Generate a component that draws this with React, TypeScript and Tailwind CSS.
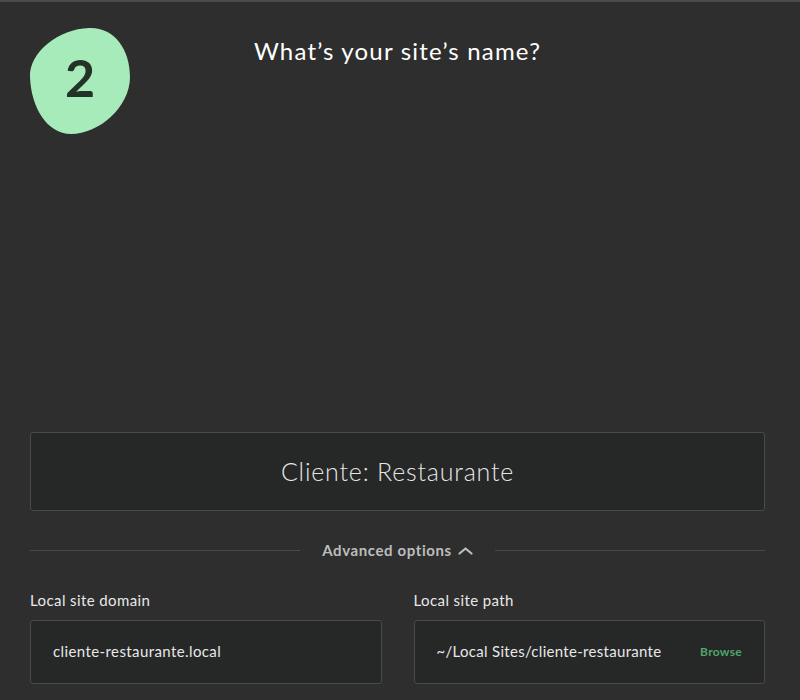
export default function App() {
  return (
    <div className="relative w-[800px] h-[700px] overflow-hidden bg-[#2e2e2e] border-t-2 border-[#4b4b4b] font-['Lato','Noto_Sans',sans-serif]">
      {/* step badge */}
      <div className="absolute left-[29px] top-[25px] w-[102px] h-[108px] flex items-center justify-center">
        <svg className="absolute inset-0" width="102" height="108" viewBox="0 0 102 108">
          <path
            d="M 60 1 C 85 0, 101 22, 101 50 C 101 80, 70 107, 42 107 C 18 107, 2 80, 1 50 C 0 25, 30 2, 60 1 Z"
            fill="#a7ebbb"
          />
        </svg>
        <span className="relative text-[52px] font-bold leading-none text-[#243327] -translate-y-[4px]">2</span>
      </div>

      <div className="flex flex-col h-full pl-[30px] pr-[35px]">
        <h1 className="mt-[34px] text-center text-[24px] leading-[30px] text-white tracking-[1.2px]">
          What’s your site’s name?
        </h1>

        <div className="mt-[366px] h-[79px] flex items-center justify-center bg-[#262727] border border-[#4a4a4a] rounded-[3px]">
          <span className="text-[25px] font-light text-[#e6e6e6] tracking-[0.8px]">Cliente: Restaurante</span>
        </div>

        <div className="mt-[28px] flex items-center gap-[22px]">
          <div className="flex-1 h-px bg-[#4a4a4a]" />
          <button className="flex items-center gap-[6px] text-[15px] font-bold text-[#bdbdbd] tracking-[0.6px]">
            Advanced options
            <svg width="15" height="9" viewBox="0 0 15 9" fill="none">
              <path d="M1.5 7.5 L7.5 2.5 L13.5 7.5" stroke="#bdbdbd" strokeWidth="2.2" strokeLinecap="round" strokeLinejoin="round" />
            </svg>
          </button>
          <div className="flex-1 h-px bg-[#4a4a4a]" />
        </div>

        <div className="mt-[28px] grid grid-cols-2 gap-[32px]">
          <div className="flex flex-col">
            <label className="text-[15px] text-[#e8e8e8] leading-[20px] tracking-[0.4px]">Local site domain</label>
            <div className="mt-[10px] h-[64px] flex items-center px-[22px] bg-[#262727] border border-[#4a4a4a] rounded-[3px]">
              <span className="text-[15px] text-[#e8e8e8] tracking-[0.4px]">cliente-restaurante.local</span>
            </div>
          </div>
          <div className="flex flex-col">
            <label className="text-[15px] text-[#e8e8e8] leading-[20px] tracking-[0.4px]">Local site path</label>
            <div className="mt-[10px] h-[64px] flex items-center justify-between pl-[22px] pr-[22px] bg-[#262727] border border-[#4a4a4a] rounded-[3px]">
              <span className="text-[15px] text-[#e8e8e8] tracking-[0.3px]">~/Local Sites/cliente-restaurante</span>
              <span className="text-[12px] font-bold text-[#51a46a] tracking-[0.3px]">Browse</span>
            </div>
          </div>
        </div>
      </div>
    </div>
  )
}
